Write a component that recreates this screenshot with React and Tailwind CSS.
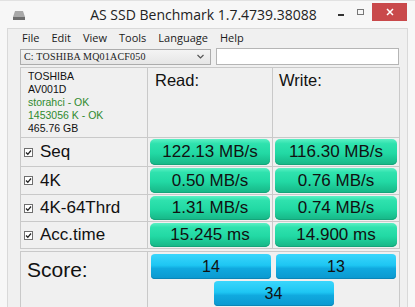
import React from 'react'

const ROWS = [
  { label: 'Seq', read: '122.13 MB/s', write: '116.30 MB/s', h: 'h-[28px]' },
  { label: '4K', read: '0.50 MB/s', write: '0.76 MB/s', h: 'h-[27px]' },
  { label: '4K-64Thrd', read: '1.31 MB/s', write: '0.74 MB/s', h: 'h-[26px]' },
  { label: 'Acc.time', read: '15.245 ms', write: '14.900 ms', h: 'h-[26px]' },
]

const MENU = ['File', 'Edit', 'View', 'Tools', 'Language', 'Help']

const green =
  'bg-[linear-gradient(to_bottom,#5cf0c4_0%,#2fe2ae_18%,#22d9a4_55%,#1dcb98_72%,#17b586_100%)]'
const blue =
  'bg-[linear-gradient(to_bottom,#3ad6fc_0%,#1ec6f3_45%,#10a9df_58%,#0b98cf_100%)]'

function Check() {
  return (
    <span className="w-[9px] h-[9px] border border-[#6f6f6f] bg-white flex items-center justify-center">
      <svg width="7" height="7" viewBox="0 0 7 7">
        <path d="M1 3.5 L2.8 5.3 L6 1.5" stroke="#222" strokeWidth="1.3" fill="none" />
      </svg>
    </span>
  )
}

function Bar({ children }) {
  return (
    <div
      className={`${green} h-full rounded-[5px] flex items-center justify-center text-[17px] text-[#111] shadow-[inset_0_-1px_0_#14a57a]`}
    >
      {children}
    </div>
  )
}

function ScoreBar({ children }) {
  return (
    <div
      className={`${blue} w-[120px] h-[25px] rounded-[4px] flex items-center justify-center text-[16px] text-[#111] shadow-[inset_0_-1px_0_#0a86b8]`}
    >
      {children}
    </div>
  )
}

export default function App() {
  return (
    <div className="w-[415px] h-[307px] overflow-hidden bg-[#f7f7f7] font-['Liberation_Sans',Arial,sans-serif] relative">
      {/* Title bar */}
      <div className="h-[28px] flex items-center relative border-t border-[#e2e2e2]">
        <svg className="absolute left-[12px] top-[9px]" width="14" height="11" viewBox="0 0 14 11">
          <path d="M3 1 H11 L13 7 H1 Z" fill="#a9a9a9" />
          <rect x="1" y="7" width="12" height="3" fill="#6e6e6e" />
        </svg>
        <div className="w-full text-center text-[14px] text-[#222] font-['Open_Sans',sans-serif] pr-[8px]">
          AS SSD Benchmark 1.7.4739.38088
        </div>
        <div className="absolute left-[338px] top-[13px] w-[6px] h-[2px] bg-[#333]" />
        <div className="absolute left-[357px] top-[8px] w-[7px] h-[6px] border border-[#777]" />
        <div className="absolute left-[372px] top-[2px] w-[35px] h-[18px] bg-[#c9494b] flex items-center justify-center">
          <svg width="8" height="8" viewBox="0 0 8 8">
            <path d="M1 1 L7 7 M7 1 L1 7" stroke="#fff" strokeWidth="1.5" />
          </svg>
        </div>
      </div>

      {/* Client area */}
      <div className="ml-[7px] w-[401px] h-[279px] bg-[#f0f0f0] border-l border-r border-t border-[#d9d9d9]">
        {/* Menu */}
        <div className="h-[18px] flex items-center pl-[14px] gap-[12px] text-[11px] text-[#1a1a1a] font-['Open_Sans',sans-serif]">
          {MENU.map(m => (
            <span key={m}>{m}</span>
          ))}
        </div>

        {/* Drive selector */}
        <div className="flex items-center pl-[12px] gap-[5px] mt-[1px]">
          <div className="w-[191px] h-[16px] border border-[#acacac] bg-[linear-gradient(to_bottom,#f4f4f4,#e6e6e6)] flex items-center pl-[3px] pr-[6px] justify-between">
            <span className="text-[10px] leading-[10px] font-['Liberation_Serif',serif] text-[#222] tracking-[0.2px]">
              C: TOSHIBA MQ01ACF050
            </span>
            <svg width="7" height="5" viewBox="0 0 7 5">
              <path d="M0.5 1 L3.5 4 L6.5 1" stroke="#555" strokeWidth="1.2" fill="none" />
            </svg>
          </div>
          <div className="w-[183px] h-[17px] border border-[#b5b5b5] bg-white" />
        </div>

        {/* Results table */}
        <div className="ml-[12px] mt-[2px] w-[380px] bg-[#c9c9c9] p-px grid grid-cols-[126px_124px_126px] gap-px">
          <div className="h-[69px] bg-[#f0f0f0] pl-[7px] pt-[2px] text-[10.5px] leading-[13px] text-[#111]">
            <div>TOSHIBA</div>
            <div>AV001D</div>
            <div className="text-[#2f8a2f]">storahci - OK</div>
            <div className="text-[#2f8a2f]">1453056 K - OK</div>
            <div>465.76 GB</div>
          </div>
          <div className="h-[69px] bg-[#f0f0f0] pl-[7px] pt-0 text-[16.5px] text-[#111]">Read:</div>
          <div className="h-[69px] bg-[#f0f0f0] pl-[6px] pt-0 text-[16.5px] text-[#111]">Write:</div>

          {ROWS.map(r => (
            <React.Fragment key={r.label}>
              <div className={`${r.h} bg-[#f0f0f0] flex items-center pl-[3px] gap-[7px] text-[17px] text-[#111]`}>
                <Check />
                <span>{r.label}</span>
              </div>
              <div className={`${r.h} bg-[#f0f0f0] px-[2px] pt-[1px] pb-[1px]`}>
                <Bar>{r.read}</Bar>
              </div>
              <div className={`${r.h} bg-[#f0f0f0] px-[2px] pt-[1px] pb-[1px]`}>
                <Bar>{r.write}</Bar>
              </div>
            </React.Fragment>
          ))}
        </div>

        {/* Score */}
        <div className="ml-[12px] mt-[2px] w-[380px] bg-[#c9c9c9] p-px pb-0 grid grid-cols-[126px_251px] gap-px">
          <div className="h-[60px] bg-[#f0f0f0] pl-[6px] pt-[2px] text-[21px] text-[#111]">Score:</div>
          <div className="h-[60px] bg-[#f0f0f0] flex flex-col items-center pt-[2px] gap-[2px]">
            <div className="flex gap-[5px]">
              <ScoreBar>14</ScoreBar>
              <ScoreBar>13</ScoreBar>
            </div>
            <ScoreBar>34</ScoreBar>
          </div>
        </div>
      </div>
    </div>
  )
}
